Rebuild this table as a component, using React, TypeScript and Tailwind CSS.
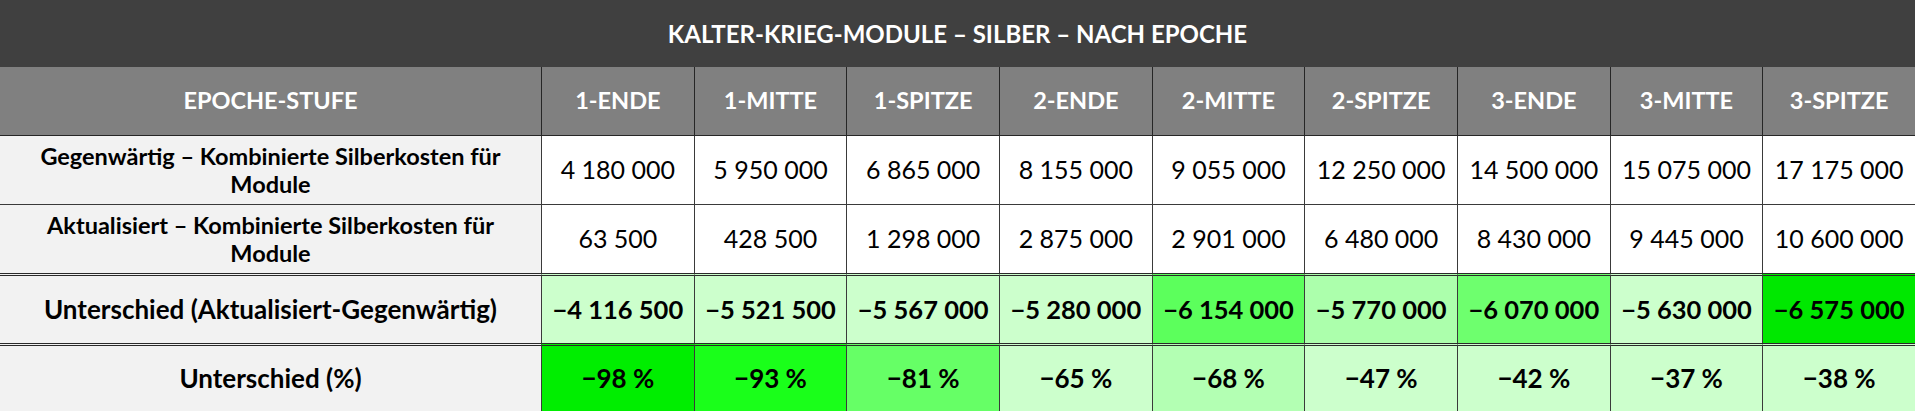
import React from "react";

const cols = ["1-ENDE", "1-MITTE", "1-SPITZE", "2-ENDE", "2-MITTE", "2-SPITZE", "3-ENDE", "3-MITTE", "3-SPITZE"];
const current = ["4 180 000", "5 950 000", "6 865 000", "8 155 000", "9 055 000", "12 250 000", "14 500 000", "15 075 000", "17 175 000"];
const updated = ["63 500", "428 500", "1 298 000", "2 875 000", "2 901 000", "6 480 000", "8 430 000", "9 445 000", "10 600 000"];
const diff = [
  { v: "\u22124 116 500", c: "bg-[#ccffcc]" },
  { v: "\u22125 521 500", c: "bg-[#ccffcc]" },
  { v: "\u22125 567 000", c: "bg-[#ccffcc]" },
  { v: "\u22125 280 000", c: "bg-[#ccffcc]" },
  { v: "\u22126 154 000", c: "bg-[#5cff5c]" },
  { v: "\u22125 770 000", c: "bg-[#acffac]" },
  { v: "\u22126 070 000", c: "bg-[#6eff6e]" },
  { v: "\u22125 630 000", c: "bg-[#ccffcc]" },
  { v: "\u22126 575 000", c: "bg-[#00e800]" },
];
const pct = [
  { v: "\u221298 %", c: "bg-[#00ee00]" },
  { v: "\u221293 %", c: "bg-[#1aff1a]" },
  { v: "\u221281 %", c: "bg-[#66ff66]" },
  { v: "\u221265 %", c: "bg-[#ccffcc]" },
  { v: "\u221268 %", c: "bg-[#b3ffb3]" },
  { v: "\u221247 %", c: "bg-[#ccffcc]" },
  { v: "\u221242 %", c: "bg-[#ccffcc]" },
  { v: "\u221237 %", c: "bg-[#ccffcc]" },
  { v: "\u221238 %", c: "bg-[#ccffcc]" },
];

const font = { fontFamily: "Lato, 'Open Sans', sans-serif" };

export default function App() {
  return (
    <div className="w-[1915px] h-[411px] overflow-hidden bg-white text-black" style={font}>
      <div className="h-[67px] bg-[#404040] flex items-center justify-center text-white font-bold text-[24px]">
        KALTER-KRIEG-MODULE – SILBER – NACH EPOCHE
      </div>
      <div className="grid grid-cols-[541px_repeat(9,minmax(0,1fr))] grid-rows-[69px_69px_68px_70px_68px]">
        {/* header */}
        <div className="bg-[#808080] text-white font-bold text-[23.5px] flex items-center justify-center border-b border-[#262626]">
          EPOCHE-STUFE
        </div>
        {cols.map((c) => (
          <div key={c} className="bg-[#808080] text-white font-bold text-[23.5px] flex items-center justify-center border-b border-l border-[#262626]">
            {c}
          </div>
        ))}
        {/* row 1 */}
        <div className="bg-[#f2f2f2] font-bold text-[23.5px] leading-[28px] flex flex-col items-center justify-center text-center border-b border-[#3a3a3a]">
          <span className="whitespace-nowrap">Gegenwärtig – Kombinierte Silberkosten für</span>
          <span>Module</span>
        </div>
        {current.map((v, i) => (
          <div key={i} className="bg-white text-[25px] flex items-center justify-center border-b border-l border-[#3a3a3a]">
            {v}
          </div>
        ))}
        {/* row 2 */}
        <div className="bg-[#f2f2f2] font-bold text-[23.5px] leading-[28px] flex flex-col items-center justify-center text-center">
          <span className="whitespace-nowrap">Aktualisiert – Kombinierte Silberkosten für</span>
          <span>Module</span>
        </div>
        {updated.map((v, i) => (
          <div key={i} className="bg-white text-[25px] flex items-center justify-center border-l border-[#3a3a3a]">
            {v}
          </div>
        ))}
        {/* row 3 */}
        <div className="bg-[#f2f2f2] font-bold text-[26px] flex items-center justify-center border-t-[3px] border-double border-[#2a2a2a]">
          Unterschied (Aktualisiert-Gegenwärtig)
        </div>
        {diff.map((d, i) => (
          <div key={i} className={`${d.c} font-bold text-[25.5px] flex items-center justify-center border-t-[3px] border-double border-l-[#3a3a3a] border-l border-t-[#2a2a2a]`}>
            {d.v}
          </div>
        ))}
        {/* row 4 */}
        <div className="bg-[#f2f2f2] font-bold text-[26px] flex items-center justify-center border-t-[3px] border-double border-[#2a2a2a]">
          Unterschied (%)
        </div>
        {pct.map((d, i) => (
          <div key={i} className={`${d.c} font-bold text-[26px] flex items-center justify-center border-t-[3px] border-double border-l-[#3a3a3a] border-l border-t-[#2a2a2a]`}>
            {d.v}
          </div>
        ))}
      </div>
    </div>
  );
}
